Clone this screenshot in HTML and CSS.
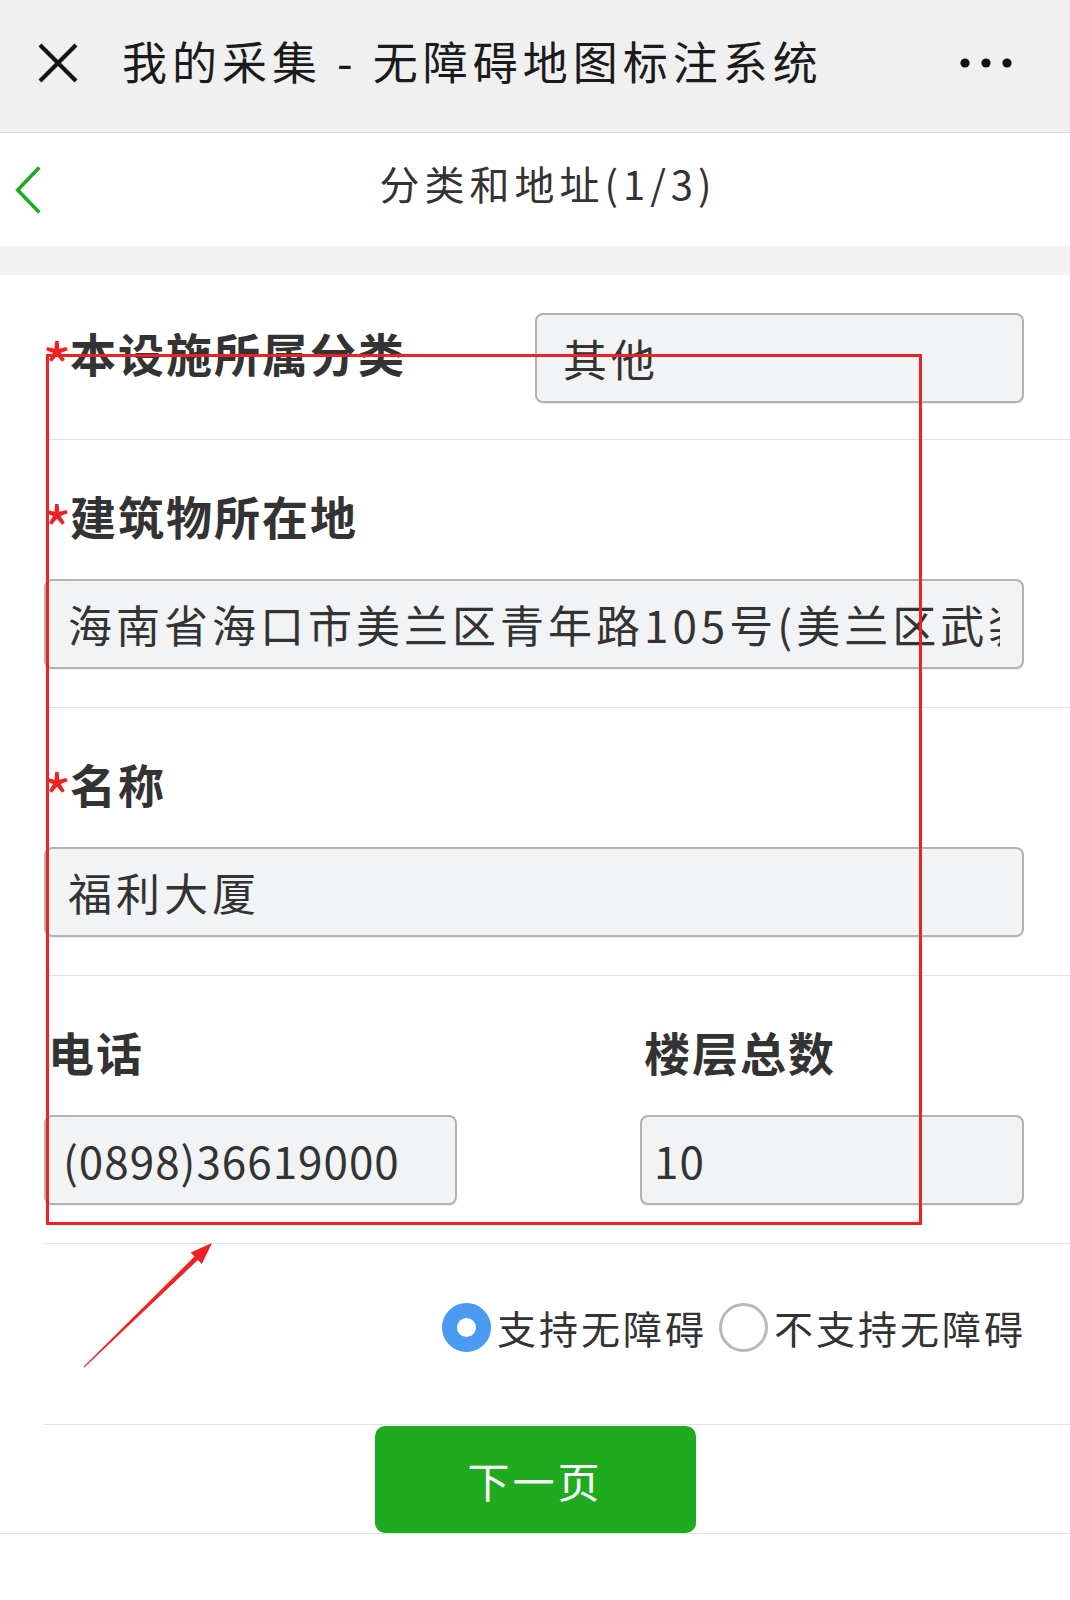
FILE: index.html
```html
<!DOCTYPE html>
<html lang="zh-CN">
<head>
  <meta charset="utf-8" />
  <meta name="viewport" content="width=device-width, initial-scale=1.0"/>
  <title>我的采集 - 无障碍地图标注系统</title>
  <link rel="stylesheet" href="styles.css">
</head>
<body>
<div class="page">

  <header class="topbar">
    <svg class="close-icon" viewBox="0 0 40 40" aria-label="关闭">
      <path d="M2 2L38 38M38 2L2 38" />
    </svg>
    <h1 class="app-title">我的采集 - 无障碍地图标注系统</h1>
    <svg class="more-icon" viewBox="0 0 52 10" aria-label="更多">
      <circle cx="5" cy="5" r="4.6" />
      <circle cx="26" cy="5" r="4.6" />
      <circle cx="47" cy="5" r="4.6" />
    </svg>
  </header>

  <nav class="navbar">
    <svg class="back-icon" viewBox="0 0 30 54" aria-label="返回">
      <polyline points="27,2 3,27 27,52" />
    </svg>
    <h2 class="nav-title">分类和地址(1/3)</h2>
  </nav>

  <div class="spacer"></div>

  <form class="form">
    <div class="field inline">
      <label><span class="req">*</span>本设施所属分类</label>
      <input class="input select" value="其他" readonly>
    </div>

    <div class="field">
      <label><span class="req">*</span>建筑物所在地</label>
      <input class="input" value="海南省海口市美兰区青年路105号(美兰区武装部旁)">
    </div>

    <div class="field">
      <label><span class="req">*</span>名称</label>
      <input class="input" value="福利大厦">
    </div>

    <div class="field cols">
      <div class="col">
        <label class="plain">电话</label>
        <input class="input num" value="(0898)36619000">
      </div>
      <div class="col">
        <label class="plain">楼层总数</label>
        <input class="input num floors" value="10">
      </div>
    </div>

    <div class="field radios">
      <label class="radio-item"><span class="radio on"></span>支持无障碍</label>
      <label class="radio-item"><span class="radio"></span>不支持无障碍</label>
    </div>
  </form>

  <div class="actions">
    <button type="button" class="next-btn">下一页</button>
  </div>

  <!-- 截图上的标注 -->
  <div class="mark-box"></div>
  <svg class="mark-arrow" viewBox="0 0 1070 1600">
    <polygon points="83.7,1366.6 194.5,1256.5 190.6,1252.6 212,1243 201.8,1264 197.9,1260.1 84.3,1367.4" />
  </svg>

</div>
</body>
</html>
```

FILE: styles.css
```css
:root {
  --bar-bg:    #f0f0f0;
  --gap-bg:    #f2f2f2;
  --line:      #e3e3e3;
  --text:      #333;
  --field-bg:  #f2f3f5;
  --field-bd:  #b2b2b2;
  --green:     #1fab1f;
  --blue:      #4a9af2;
  --red:       #ee2222;
}
*, *::before, *::after { box-sizing: border-box; margin:0; padding:0; }
body {
  font-family: "Noto Sans CJK SC", "Noto Sans", sans-serif;
  background:#fff;
  color:var(--text);
}
.page { position:relative; width:1070px; min-height:1600px; }

/* top bar */
.topbar {
  height:133px; background:var(--bar-bg);
  border-bottom:1px solid #dadada;
  display:flex; align-items:center;
  padding:0 58px 6px 38px;
}
.close-icon { width:40px; height:40px; flex:none; }
.close-icon path { stroke:#141414; stroke-width:4.2; fill:none; }
.app-title {
  flex:1; margin-left:44px; padding-bottom:6px;
  font-size:45px; font-weight:400; line-height:1;
  letter-spacing:5px; color:#1b1b1b;
}
.more-icon { width:52px; height:10px; flex:none; }
.more-icon circle { fill:#111; }

/* nav */
.navbar {
  height:113px; display:flex; align-items:center;
  padding:0 16px 0 15px;
}
.back-icon { width:27px; height:50px; flex:none; }
.back-icon polyline { stroke:var(--green); stroke-width:4; fill:none; }
.nav-title {
  flex:1; text-align:center; padding-bottom:14px;
  font-size:40px; font-weight:400; line-height:1;
  letter-spacing:5px; color:#333;
}
.spacer { height:29px; background:var(--gap-bg); }

/* form */
.form { padding-left:44px; }
.field {
  border-bottom:1px solid var(--line);
  padding:43px 46px 38px 0;
}
.field label {
  display:block;
  font-size:46px; font-weight:700; line-height:64px;
  letter-spacing:2px; color:#333;
  margin-bottom:32px;
}
.field label.plain { padding-left:4px; }
.req {
  display:inline-block; vertical-align:top;
  width:25px; margin-right:1px;
  font-size:64px; line-height:64px; font-weight:400;
  position:relative; top:12px; left:-2px;
  color:var(--red); letter-spacing:0;
}

.input {
  display:block; width:100%; height:90px;
  font:inherit; font-size:44px; letter-spacing:4px; color:#333;
  background:var(--field-bg);
  border:2px solid var(--field-bd); border-radius:8px;
  padding:0 22px; outline:none;
  box-shadow:0 1px 1px rgba(0,0,0,.08);
}
.input.num { padding-left:17px; letter-spacing:1px; }
.input.floors { padding-left:12px; }

.field.inline {
  display:flex; align-items:center;
  padding:38px 46px 36px 0;
}
.field.inline label { margin-bottom:12px; }
.input.select { width:489px; margin-left:auto; padding-left:26px; }

.field.cols {
  display:grid; grid-template-columns:596px 1fr;
}
.col:first-child .input { width:413px; }

.field.radios {
  height:181px;
  display:flex; align-items:center; justify-content:flex-end;
  padding:0 44px 14px 0;
}
.radio-item {
  display:flex !important; align-items:center;
  font-size:39px !important; font-weight:400 !important; line-height:1 !important;
  letter-spacing:3px !important; color:#333 !important;
  margin:0 0 0 12px !important;
}
.radio {
  width:49px; height:49px; border-radius:50%;
  border:3px solid #b9b9b9; background:#fff;
  margin-right:6px; flex:none;
}
.radio.on { border:15px solid var(--blue); }

/* bottom button */
.actions {
  padding-top:1px;
  border-bottom:1px solid var(--line);
}
.next-btn {
  display:block; margin:0 auto;
  width:321px; height:107px;
  background:var(--green); color:#fff;
  border:none; border-radius:10px;
  font:inherit; font-size:42px; letter-spacing:3px;
  cursor:pointer;
}

/* annotation overlay */
.mark-box {
  position:absolute; left:46px; top:354px;
  width:876px; height:871px;
  border:3px solid var(--red);
  pointer-events:none;
}
.mark-arrow {
  position:absolute; left:0; top:0;
  width:1070px; height:1600px;
  pointer-events:none;
}
.mark-arrow polygon { fill:var(--red); }
```
